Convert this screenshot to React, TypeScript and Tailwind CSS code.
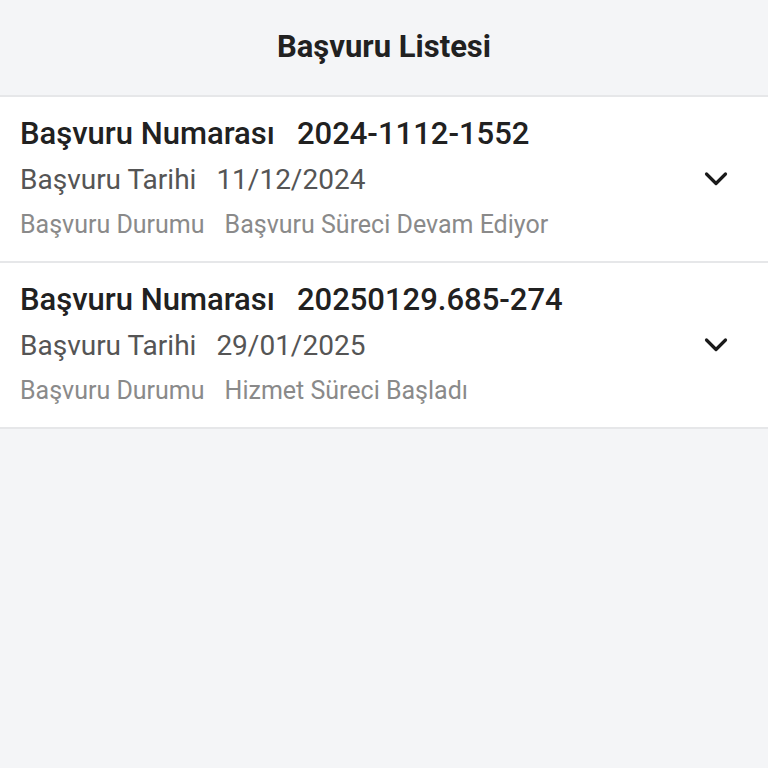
import React from "react";

type Application = {
  number: string;
  date: string;
  status: string;
};

const applications: Application[] = [
  { number: "2024-1112-1552", date: "11/12/2024", status: "Başvuru Süreci Devam Ediyor" },
  { number: "20250129.685-274", date: "29/01/2025", status: "Hizmet Süreci Başladı" },
];

const ChevronDown = () => (
  <svg width="24" height="16" viewBox="0 0 24 16" fill="none" stroke="#1a1a1a" strokeWidth="3.2" strokeLinecap="round" strokeLinejoin="round">
    <path d="M2.5 3L12 12.5 21.5 3" />
  </svg>
);

const ApplicationRow: React.FC<{ item: Application }> = ({ item }) => (
  <div className="flex bg-white border-b-2 border-[#e6e7e9] pl-5 pr-[40px] h-[166px]">
    <div className="flex-1 flex flex-col pt-[14px]">
      <div className="flex items-center h-[46px] text-[31px] font-medium text-[#212121]">
        <span>Başvuru Numarası</span>
        <span className="ml-[22px]">{item.number}</span>
      </div>
      <div className="flex items-center h-[46px] text-[28px] text-[#555555]">
        <span>Başvuru Tarihi</span>
        <span className="ml-[20px]">{item.date}</span>
      </div>
      <div className="flex items-center h-[44px] text-[25px] text-[#8a8a8a]">
        <span>Başvuru Durumu</span>
        <span className="ml-[20px]">{item.status}</span>
      </div>
    </div>
    <div className="self-center">
      <ChevronDown />
    </div>
  </div>
);

export default function App() {
  return (
    <div className="min-h-[768px] bg-[#f4f5f7]" style={{ fontFamily: "Roboto, 'Noto Sans', sans-serif" }}>
      <header className="h-[97px] flex items-center justify-center border-b-2 border-[#e6e7e9]">
        <h1 className="text-[31px] font-bold text-[#212121]">Başvuru Listesi</h1>
      </header>
      {applications.map((a) => (
        <ApplicationRow key={a.number} item={a} />
      ))}
    </div>
  );
}
